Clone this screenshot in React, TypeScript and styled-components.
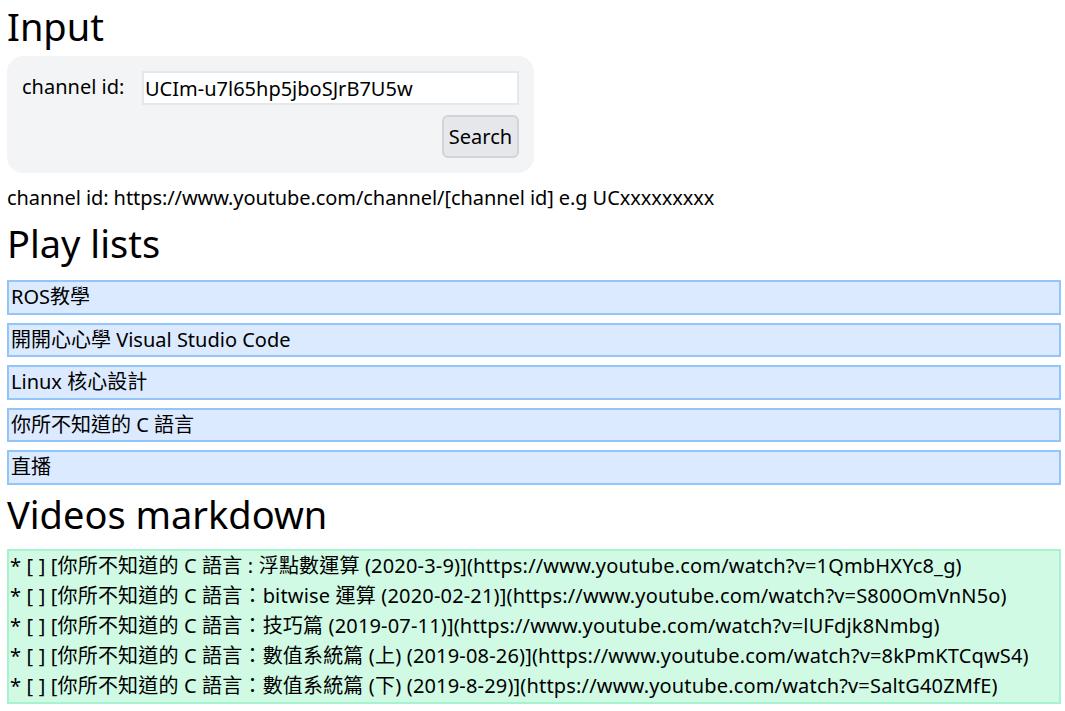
import React from "react";
import styled, { createGlobalStyle } from "styled-components";

const Global = createGlobalStyle`
  html, body {
    margin: 0;
    padding: 0;
    background: #ffffff;
  }
  body {
    font-family: "Noto Sans", "Noto Sans CJK TC", sans-serif;
    font-size: 20px;
    color: #000000;
  }
  * { box-sizing: border-box; }
`;

const Page = styled.main`
  display: flex;
  flex-direction: column;
  padding: 0 4px 0 7px;
`;

const Heading = styled.h1<{ $top: number; $bottom: number }>`
  margin: ${(p) => p.$top}px 0 ${(p) => p.$bottom}px 0;
  font-size: 38px;
  font-weight: 400;
  line-height: 52px;
`;

const Panel = styled.section`
  width: 527px;
  background: #f3f4f6;
  border-radius: 16px;
  padding: 15px;
  display: grid;
  grid-template-columns: 120px 1fr;
  row-gap: 10px;
`;

const Label = styled.label`
  line-height: 32px;
  white-space: nowrap;
`;

const TextInput = styled.input`
  height: 34px;
  width: 100%;
  border: 2px solid #e5e7eb;
  background: #ffffff;
  font: inherit;
  line-height: 30px;
  padding: 0 1px;
  outline: none;
  color: #000;
`;

const ButtonRow = styled.div`
  grid-column: 2;
  display: flex;
  justify-content: flex-end;
`;

const Button = styled.button`
  height: 43px;
  width: 77px;
  border: 2px solid #d1d5db;
  border-radius: 6px;
  background: #e5e7eb;
  font: inherit;
  color: #000;
  padding: 0;
`;

const Hint = styled.p`
  margin: 10px 0 0 0;
  line-height: 30px;
  letter-spacing: -0.08px;
`;

const List = styled.ul`
  list-style: none;
  margin: 0;
  padding: 0;
  display: flex;
  flex-direction: column;
  gap: 8px;
`;

const Item = styled.li`
  background: #dbeafe;
  border: 2px solid #93c5fd;
  padding: 0 2px;
  line-height: 30.5px;
`;

const Markdown = styled.div`
  background: #d1fae5;
  border: 2px solid #a7f3d0;
  padding: 0 1px;
`;

const Line = styled.div`
  line-height: 30.2px;
  letter-spacing: 0.17px;
  white-space: pre;
`;

const playlists = [
  "ROS教學",
  "開開心心學 Visual Studio Code",
  "Linux 核心設計",
  "你所不知道的 C 語言",
  "直播",
];

const videos = [
  "* [ ] [你所不知道的 C 語言 : 浮點數運算 (2020-3-9)](https://www.youtube.com/watch?v=1QmbHXYc8_g)",
  "* [ ] [你所不知道的 C 語言：bitwise 運算 (2020-02-21)](https://www.youtube.com/watch?v=S800OmVnN5o)",
  "* [ ] [你所不知道的 C 語言：技巧篇 (2019-07-11)](https://www.youtube.com/watch?v=lUFdjk8Nmbg)",
  "* [ ] [你所不知道的 C 語言：數值系統篇 (上) (2019-08-26)](https://www.youtube.com/watch?v=8kPmKTCqwS4)",
  "* [ ] [你所不知道的 C 語言：數值系統篇 (下) (2019-8-29)](https://www.youtube.com/watch?v=SaltG40ZMfE)",
];

export default function App() {
  return (
    <>
      <Global />
      <Page>
        <Heading $top={0} $bottom={4}>Input</Heading>
        <Panel>
          <Label htmlFor="cid">channel id:</Label>
          <TextInput id="cid" defaultValue="UCIm-u7l65hp5jboSJrB7U5w" />
          <ButtonRow>
            <Button type="button">Search</Button>
          </ButtonRow>
        </Panel>
        <Hint>channel id: https://www.youtube.com/channel/[channel id] e.g UCxxxxxxxxx</Hint>
        <Heading $top={4} $bottom={11}>Play lists</Heading>
        <List>
          {playlists.map((p) => (
            <Item key={p}>{p}</Item>
          ))}
        </List>
        <Heading $top={3} $bottom={9}>Videos markdown</Heading>
        <Markdown>
          {videos.map((v) => (
            <Line key={v}>{v}</Line>
          ))}
        </Markdown>
      </Page>
    </>
  );
}
